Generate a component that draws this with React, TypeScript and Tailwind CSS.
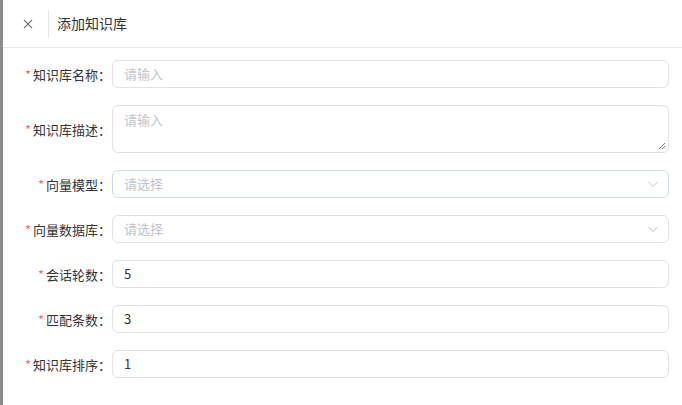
import React from "react";

const font = { fontFamily: '"Noto Sans CJK SC", "Noto Sans", sans-serif' };

function Label({ text }: { text: string }) {
  return (
    <div className="w-[112px] shrink-0 pr-[1px] text-right text-[13px] text-[#333] leading-none">
      <span className="text-[#f56c6c] mr-[2px]">*</span>
      {text}：
    </div>
  );
}

function Chevron() {
  return (
    <svg width="12" height="12" viewBox="0 0 12 12" fill="none">
      <path d="M1.5 4l4.5 4.5L10.5 4" stroke="#c0c4cc" strokeWidth="1" />
    </svg>
  );
}

function Row({ label, children }: { label: string; children: React.ReactNode }) {
  return (
    <div className="flex items-center">
      <Label text={label} />
      {children}
    </div>
  );
}

function TextInput({ value, placeholder }: { value?: string; placeholder?: string }) {
  return (
    <div className="w-[557px] h-[28px] rounded-[6px] border border-[#e2e2e2] flex items-center px-[11px] text-[13px]">
      {value ? (
        <span className="text-[#333]">{value}</span>
      ) : (
        <span className="text-[#c0c4cc]">{placeholder}</span>
      )}
    </div>
  );
}

function Select({ focused }: { focused?: boolean }) {
  return (
    <div
      className={`w-[557px] h-[28px] rounded-[6px] border flex items-center justify-between pl-[11px] pr-[9px] text-[13px] ${
        focused ? "border-[#c8dcef]" : "border-[#e2e2e2]"
      }`}
    >
      <span className="text-[#c0c4cc]">请选择</span>
      <Chevron />
    </div>
  );
}

export default function App() {
  return (
    <div className="w-[682px] h-[405px] bg-white flex overflow-hidden" style={font}>
      <div className="w-[3px] h-full bg-[#8c8c8c] shrink-0" />
      <div className="flex-1 flex flex-col">
        <div className="h-[48px] border-b border-[#e4e4e4] flex items-center">
          <div className="w-[45px] flex justify-center pl-[4px]">
            <svg width="10" height="10" viewBox="0 0 10 10">
              <path d="M1 1l8 8M9 1l-8 8" stroke="#777" strokeWidth="1.1" />
            </svg>
          </div>
          <div className="w-px h-[28px] bg-[#e4e4e4]" />
          <div className="ml-[8px] text-[14px] text-[#333]">添加知识库</div>
        </div>
        <div className="flex flex-col gap-[17px] pt-[12px] -ml-[3px]">
          <Row label="知识库名称">
            <TextInput placeholder="请输入" />
          </Row>
          <Row label="知识库描述">
            <div className="relative w-[557px] h-[48px] rounded-[6px] border border-[#e2e2e2] px-[11px] pt-[4px] text-[13px]">
              <span className="text-[#c0c4cc]">请输入</span>
              <svg className="absolute right-[2px] bottom-[2px]" width="8" height="8" viewBox="0 0 8 8">
                <path d="M7 1L1 7M7 4L4 7M7 6.5L6.5 7" stroke="#777" strokeWidth="0.9" />
              </svg>
            </div>
          </Row>
          <Row label="向量模型">
            <Select focused />
          </Row>
          <Row label="向量数据库">
            <Select />
          </Row>
          <Row label="会话轮数">
            <TextInput value="5" />
          </Row>
          <Row label="匹配条数">
            <TextInput value="3" />
          </Row>
          <Row label="知识库排序">
            <TextInput value="1" />
          </Row>
        </div>
      </div>
    </div>
  );
}
